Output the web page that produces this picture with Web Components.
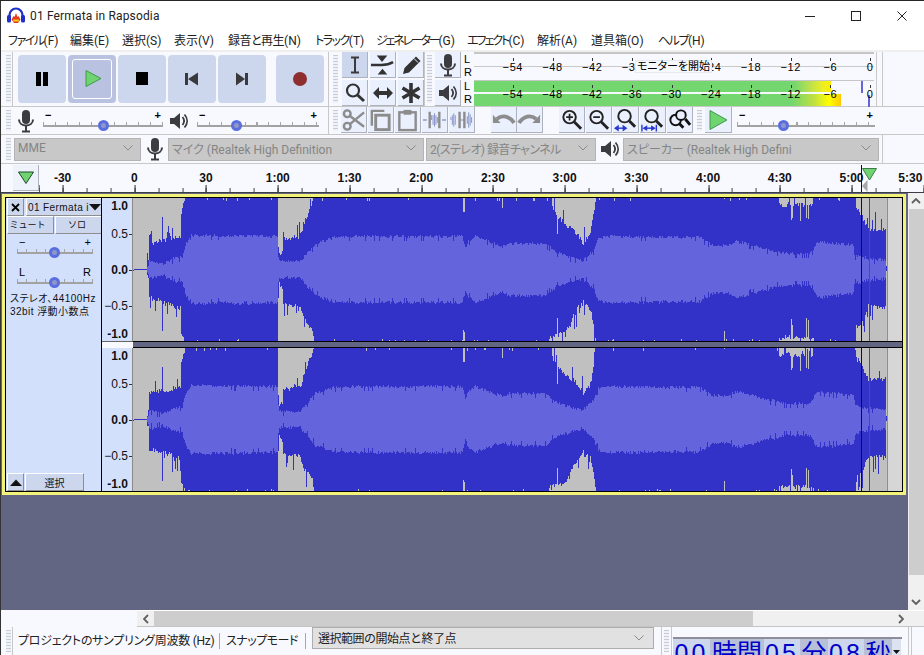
<!DOCTYPE html>
<html lang="ja"><head><meta charset="utf-8"><title>Audacity</title>
<style>
html,body{margin:0;padding:0;width:924px;height:655px;overflow:hidden;background:#f8f9ff}
body{font-family:Roboto,"Noto Sans CJK JP",sans-serif;font-size:12px;color:#000}
</style></head><body>
<aud-app></aud-app>
<script>
const UI='Roboto,"Noto Sans CJK JP",sans-serif';
function def(name,css,html,init){
  customElements.define(name,class extends HTMLElement{
    constructor(){super();const h=typeof html==='function'?html(this):html;
      this.attachShadow({mode:'open'}).innerHTML='<style>'+css+'</style>'+h;}
    connectedCallback(){ if(init) init(this); }
  });
}
const svg=(w,h,b)=>`<svg xmlns="http://www.w3.org/2000/svg" width="${w}" height="${h}" viewBox="0 0 ${w} ${h}">${b}</svg>`;
const I={
 pause:svg(20,20,'<path d="M4 3h5v14H4zM11 3h5v14h-5z" fill="#000"/>'),
 play:svg(20,20,'<path d="M4 1.500L19 9.500 4 17.500z" fill="#6fd36f" stroke="#3f9a4b"/>'),
 stop:svg(20,20,'<path d="M4 3h12v13H4z" fill="#000"/>'),
 prev:svg(20,20,'<path d="M3 4h3v12H3zM16 3.500v13L6 10z" fill="#3a3a3e"/>'),
 next:svg(20,20,'<path d="M16 4h-3v12h3zM4 3.500v13L13 10z" fill="#3a3a3e"/>'),
 rec:svg(20,20,'<circle cx="10" cy="10" r="7" fill="#8f2e2e"/>'),
 ibeam:svg(24,24,'<path d="M8 4.500h8M8 19.500h8M12 5v14" fill="none" stroke="#3a3a3a" stroke-width="2"/>'),
 env:svg(26,26,'<path d="M7 3h11l-5.500 7zM8 23h10l-5-6z" fill="#333"/><path d="M1 13h11q7 0 12-3" fill="none" stroke="#333" stroke-width="2.500"/>'),
 pencil:svg(24,24,'<path d="M4 21l1.500-6L17 3.500l4.500 4.500L10 19.500z" fill="#333"/><path d="M15 5.500l4 4" stroke="#eaf0fd" stroke-width="1"/>'),
 mag:svg(24,24,'<circle cx="10" cy="9.500" r="6" fill="none" stroke="#333" stroke-width="2.200"/><path d="M14.500 14l6.500 6" stroke="#333" stroke-width="3"/>'),
 shift:svg(24,24,'<path d="M2 12l6-6v4h8V6l6 6-6 6v-4H8v4z" fill="#333"/>'),
 multi:svg(24,24,'<path d="M12 2v20M3.500 7l17 10M20.500 7l-17 10" stroke="#333" stroke-width="3.600"/>'),
 mic:svg(18,24,'<rect x="5" y="1" width="8" height="14" rx="4" fill="#3c3c40"/><path d="M2 10.500c0 8 14 8 14 0" fill="none" stroke="#3c3c40" stroke-width="2"/><path d="M9 17v5M5 22.500h8" stroke="#3c3c40" stroke-width="2"/>'),
 spk:svg(20,20,'<path d="M1 7h4l6-5v16l-6-5H1z" fill="#3c3c40"/><path d="M13.500 6c2 2.500 2 5.500 0 8M15.500 3.500c3.500 4 3.500 9 0 13" fill="none" stroke="#3c3c40" stroke-width="1.800"/>'),
 cut:svg(26,26,'<g fill="none" stroke="#8c8c8c" stroke-width="2.500"><circle cx="6.500" cy="6.500" r="3.500"/><circle cx="6.500" cy="19.500" r="3.500"/><path d="M9 8.500L24 20M9 17.500L24 5"/></g>'),
 copy:svg(26,26,'<path d="M4 19V3.500h13" fill="none" stroke="#8c8c8c" stroke-width="2.500"/><rect x="8" y="8" width="14" height="15" fill="none" stroke="#8c8c8c" stroke-width="3"/>'),
 paste:svg(26,26,'<rect x="4.500" y="5" width="17" height="18.500" fill="none" stroke="#8c8c8c" stroke-width="2.500"/><path d="M9 2.500h8v5H9z" fill="#8c8c8c"/>'),
 trim:svg(26,26,'<path d="M1 13h4M21 13h4" stroke="#8c9ac0" stroke-width="1.500"/><path d="M8 4.500v17M18 4.500v17" stroke="#8c8c8c" stroke-width="2.500"/><path d="M10 13v-5m1.500 0v10m1.500-12v14m1.500-12v10m1.500-8v6" stroke="#8a92c8" stroke-width="1"/>'),
 sil:svg(26,26,'<path d="M11 4.500v17M16 4.500v17" stroke="#8c8c8c" stroke-width="2.500"/><path d="M2 13v-3m1.500-2v10m1.500-12v14m1.500-12v10M19 9v8m1.500-12v16m1.500-14v12m1.500-9v6" stroke="#8a92c8" stroke-width="1"/><path d="M11 13h5" stroke="#8c8c8c"/>'),
 undo:svg(26,26,'<path d="M2 16V7.500l8 8.500H2z" fill="#8c8c8c"/><path d="M6 12c6-5 13-3 18 4" fill="none" stroke="#8c8c8c" stroke-width="4"/>'),
 redo:svg(26,26,'<path d="M24 16V7.500L16 16h8z" fill="#8c8c8c"/><path d="M20 12c-6-5-13-3-18 4" fill="none" stroke="#8c8c8c" stroke-width="4"/>'),
 zin:svg(26,26,'<circle cx="11" cy="10" r="6.500" fill="none" stroke="#222" stroke-width="2"/><path d="M16 15l7 7" stroke="#222" stroke-width="3"/><path d="M7.500 10h7M11 6.500v7" stroke="#222" stroke-width="1.800"/>'),
 zout:svg(26,26,'<circle cx="11" cy="10" r="6.500" fill="none" stroke="#222" stroke-width="2"/><path d="M16 15l7 7" stroke="#222" stroke-width="3"/><path d="M7.500 10h7" stroke="#222" stroke-width="1.800"/>'),
 zsel:svg(26,26,'<circle cx="12" cy="9" r="6.500" fill="none" stroke="#222" stroke-width="2"/><path d="M17 14l6 6" stroke="#222" stroke-width="3"/><path d="M1 21.500l5-3.500v7zM15 21.500l-5-3.500v7z" fill="#2a3ad0"/><path d="M5 21.500h6" stroke="#2a3ad0" stroke-width="1.500"/>'),
 zfit:svg(26,26,'<circle cx="12" cy="9" r="6.500" fill="none" stroke="#222" stroke-width="2"/><path d="M17 14l6 6" stroke="#222" stroke-width="3"/><path d="M2 18v7M17 18v7" stroke="#2a3ad0" stroke-width="1.500"/><path d="M2.500 21.500l5-3v6zM16.500 21.500l-5-3v6z" fill="#2a3ad0"/><path d="M5 21.500h9" stroke="#2a3ad0" stroke-width="1.500"/>'),
 ztog:svg(26,26,'<circle cx="9" cy="13" r="5.500" fill="none" stroke="#111" stroke-width="2"/><circle cx="14.500" cy="8" r="5" fill="#eaf0fd" stroke="#111" stroke-width="2"/><path d="M13 17l4 4M19 12l5 6" stroke="#111" stroke-width="3"/>'),
 play2:svg(24,24,'<path d="M4 2.500L21 12 4 21.500z" fill="#6fd36f" stroke="#3f9a4b"/>'),
 logo:svg(18,17,'<path d="M2.500 10V8a6.500 6.500 0 0 1 13 0v2" fill="none" stroke="#1d2fc4" stroke-width="2.200"/><rect x="0" y="8" width="4" height="7.500" rx="1.500" fill="#1d2fc4"/><rect x="14" y="8" width="4" height="7.500" rx="1.500" fill="#1d2fc4"/><path d="M4.500 12.500l2-3.500 1 1 1.500-4 1.500 4 1-1 2 3.500-2.500 3.500h-4z" fill="#e23b21"/><path d="M6 13.500h6" stroke="#f5c518" stroke-width="2"/>'),
 chev:svg(10,6,'<path d="M.5.500L5 5 9.500.500" fill="none" stroke="#8a8a8a" stroke-width="1"/>')
};

def('aud-grip',':host{display:block;flex:none;width:5px;align-self:stretch;margin:3px 0;background:repeating-linear-gradient(#c9ccd6 0 1px,#eff1f8 1px 3px)}','');

def('aud-titlebar',`:host{display:flex;align-items:center;height:29px;background:#fff;font:12px ${UI};color:#222}
 .ic{margin:0 5px 0 7px;display:flex} .t{flex:1;letter-spacing:.15px}
 .w{display:flex;align-items:center;justify-content:center;width:46px;height:29px;flex:none}`,
 `<span class="ic">${I.logo}</span><span class="t"><slot></slot></span>
 <span class="w">${svg(10,10,'<path d="M0 5.500h10" stroke="#222"/>')}</span>
 <span class="w">${svg(10,10,'<rect x=".5" y=".5" width="9" height="9" fill="none" stroke="#222"/>')}</span>
 <span class="w" style="margin-right:-1px">${svg(10,10,'<path d="M.5.500l9 9M9.500.500l-9 9" stroke="#222"/>')}</span>`);

def('aud-menubar',`:host{display:flex;height:20px;box-sizing:border-box;padding-bottom:2px;align-items:center;background:#fff;padding-left:8px;font:12px ${UI};font-feature-settings:"palt";color:#222;white-space:nowrap}
 ::slotted(span){flex:none}`,'<slot></slot>');

def('aud-btn',`:host{display:flex;align-items:center;justify-content:center;flex:none;box-sizing:border-box;width:26px;height:26px;background:#eaf0fd;border-right:1px solid #aeb2bc;border-bottom:1px solid #aeb2bc}
 :host([big]){width:48px;height:48px;background:#ccd7ee;border:0;border-radius:4px}
 :host([hot]){background:#b9c3e1;position:relative}
 :host([hot])::before{content:"";position:absolute;inset:4px;border:1px solid #fff;border-radius:3px}
 :host([on]){background:#ccd7ee}`,'<slot></slot>');

def('aud-slider',`:host{display:block;flex:none;position:relative;font:bold 11px "Liberation Sans",sans-serif;height:28px}
 .l{display:flex;justify-content:space-between;padding:0 2px;height:16px;line-height:16px;box-sizing:border-box}
 .tk{position:absolute;left:0;right:0;top:15px;height:3px;background:repeating-linear-gradient(90deg,#a4a4a4 0 1px,transparent 1px var(--s,11.9px))}
 .tr{position:absolute;left:0;right:0;top:18px;height:2px;background:#a2a2a2}
 .th{position:absolute;top:13px;width:11px;height:11px;box-sizing:border-box;border-radius:50%;border:3px solid #5a6ee0;background:#8f97c8;margin-left:-5.500px}`,
 e=>`<div class="l"><span>${e.getAttribute('a')}</span><span>${e.getAttribute('b')}</span></div><div class="tk"></div><div class="tr"></div><div class="th" style="left:${e.getAttribute('pos')}px"></div>`);

def('aud-meter',`:host{display:flex;flex:none;height:var(--h,28px);position:relative;font:11px "Liberation Sans",sans-serif;color:#000}
 .lr{width:10px;display:flex;flex-direction:column;line-height:13px;box-sizing:border-box;padding-top:var(--lp,1px)}
 .m{position:relative;width:400px;box-sizing:border-box;background:#f8f9ff;border-top:var(--bt,2px) solid #c6c6c6;display:flex;flex-direction:column}
 .b{height:var(--bar,12px);background:#f8f9ff}
 .g{height:var(--gap,1px);background:var(--gapc,#c9c9c9)}
 .b2{height:var(--bar2,13px)}
 .fill{height:100%}
 .pk{position:absolute;width:2px;background:#6464dc}
 .sc{position:absolute;left:19px;top:0;bottom:0;display:flex;align-items:center;letter-spacing:.6px}
 .sc span{width:39.700px;flex:none;text-align:center;position:relative}
 .sc span::before{content:"";position:absolute;left:50%;top:-3px;height:3px;border-left:1px solid #333}
 .tip{position:absolute;left:161px;width:77px;top:6px;height:13px;box-sizing:border-box;background:#f8f9ff;border:1px solid #e6e8f2;text-align:center;font:11px ${UI};font-feature-settings:"palt";line-height:12px}`,
 e=>{const s=['−54','−48','−42','−36','−30','−24','−18','−12','−6','0'].map(x=>`<span>${x}</span>`).join('');
 const play=e.hasAttribute('play');
 return `<div class="lr"><span>L</span><span>R</span></div><div class="m">
  <div class="b">${play?'<div class="fill" style="width:357px;background:linear-gradient(90deg,#74d66e 0 320px,#b8e050 335px,#f0f020 350px,#ffee00)"></div>':''}</div><div class="g"></div>
  <div class="b b2">${play?'<div class="fill" style="width:367px;background:linear-gradient(90deg,#74d66e 0 318px,#c0e040 340px,#ffff00 355px,#ffc800)"></div>':''}</div>
  ${play?'<div class="pk" style="left:387px;top:0;height:12px"></div><div class="pk" style="left:394px;top:14px;height:12px"></div>':''}
  <div class="sc">${s}</div>
  ${play?'':'<div class="tip">モニターを開始</div>'}
 </div>`});

def('aud-combo',`:host{display:flex;align-items:center;flex:none;box-sizing:border-box;height:23px;background:#c8c8c8;border:1px solid #b4b4b4;color:#858585;font:12px ${UI};font-feature-settings:"palt";padding:0 3px 2px;white-space:nowrap;overflow:hidden}
 :host([live]){background:#e1e1e1;border:1px solid #adadad;color:#222;font-feature-settings:normal;height:22px;padding:0 5px 1px}
 .t{flex:1;overflow:hidden;letter-spacing:var(--ls,0)} .c{flex:none;display:flex;margin-left:4px;margin-right:4px;letter-spacing:0}`,
 `<span class="t"><slot></slot></span><span class="c">${I.chev}</span>`);

def('aud-transport',`:host{display:flex;flex:none;width:329px;box-sizing:border-box;padding-left:6px;height:54px;border-right:1px solid #c8c8c8}
 .in{display:flex;gap:2px;margin-left:1px;border-left:1px solid #c8c8c8;padding:3px 0 0 5px;height:51px;flex:1}
 ::slotted(aud-btn:last-child){margin-left:8px}`,'<aud-grip></aud-grip><div class="in"><slot></slot></div>');

def('aud-toolgrid',`:host{display:grid;grid-template-columns:repeat(3,26px);grid-template-rows:26px 26px;gap:2px 2px;flex:none;align-content:start}`,'<slot></slot>');

def('aud-ruler',`:host{display:flex;height:28px;flex:none;border-top:1px solid #c8c8c8;border-bottom:1px solid #3c3c44;background:#f8f9ff;position:relative;box-sizing:content-box;overflow:hidden}
 .sp{width:13px;flex:none}
 .b{width:26px;height:26px;margin-top:1px;flex:none;box-sizing:border-box;background:#eef2fb;border-right:1px solid #aeb2bc;border-bottom:1px solid #aeb2bc;display:flex;align-items:center;justify-content:center}
 .sc{flex:1;position:relative;overflow:hidden;display:flex;font:bold 12px "Liberation Sans",sans-serif;color:#111;padding-top:6px;box-sizing:border-box}
 .sc span{flex:none;width:71.730px;text-align:center;line-height:16px}
 .sc span:first-child{margin-left:-12.270px}
 .sc span:last-of-type{width:46px}
 .tk{position:absolute;left:0;right:0;bottom:0;height:4px;background:repeating-linear-gradient(90deg,#444 0 1px,transparent 1px 23.910px) 23.570px 0}
 .mj{position:absolute;left:0;right:0;bottom:0;height:7px;background:repeating-linear-gradient(90deg,#222 0 1px,transparent 1px 71.730px) 23.570px 0}
 .cur{position:absolute;left:861px;top:1px;bottom:0;width:1px;background:#111}
 .m{position:absolute;left:862px;top:4px}`,
 ()=>`<div class="sp"></div><div class="b">${svg(18,14,'<path d="M1.500 1h15L9 12.500z" fill="#6fd36f" stroke="#1f4a2a"/>')}</div>
 <div class="sc">${['-30','0','30','1:00','1:30','2:00','2:30','3:00','3:30','4:00','4:30','5:00','5:30'].map(x=>`<span>${x}</span>`).join('')}<div class="tk"></div><div class="mj"></div></div>
 <div class="cur"></div><div class="m">${svg(16,24,'<path d="M.5.500h14L7.500 12z" fill="#6fd36f" stroke="#3f7a4b"/><path d="M0 18l5.500-6v12z" fill="#a8a8a8"/>')}</div>`);

def('aud-vruler',`:host{display:grid;grid-template-rows:15px 42px 30px 41px 15px;width:30px;flex:none;box-sizing:content-box;background:#d2e0fc;border-right:1px solid #8a8a8a;font:12px "Liberation Sans",sans-serif;color:#111}
 div{display:flex;align-items:center;justify-content:flex-end;padding-right:4px;position:relative}
 div.k{font-weight:bold}
 div.t::after{content:"";position:absolute;right:0;top:50%;width:3px;border-top:1px solid #333}`,
 `<div class="k">1.0</div><div class="t">0.5</div><div class="k t">0.0</div><div class="t">−0.5</div><div class="k">-1.0</div>`);

/* waveform ------------------------------------------------------------ */
const TOP=[[133,0],[146,.6],[148,5],[149,24],[180,30],[181,55],[184,65],[185,72],[277,72],[278,20],[279,12],[282,14],[283,28],[300,30],[303,40],[305,48],[311,60],[314,72],[551,72],[552,60],[558,50],[566,42],[575,35],[580,28],[583,24],[590,32],[592,45],[594,58],[596,72],[778,72],[779,62],[813,62],[814,72],[855,72],[856,58],[862,50],[868,38],[886,38]];
const BOT=[[133,0],[146,.6],[148,5],[149,26],[180,36],[181,62],[184,68],[185,72],[277,72],[278,28],[279,12],[282,18],[283,32],[300,34],[303,46],[312,58],[314,72],[548,72],[549,66],[560,62],[565,60],[570,50],[578,36],[582,32],[590,36],[592,46],[594,58],[596,72],[778,72],[779,65],[813,65],[814,72],[855,72],[856,55],[862,50],[868,35],[886,35]];
const RMS=[[133,0],[146,.5],[148,4],[149,9],[163,6],[173,11],[182,13],[185,24],[190,34],[277,33],[278,14],[279,8],[300,8],[303,12],[315,26],[337,33],[462,33],[465,21],[468,28],[475,33],[502,23],[508,26],[545,26],[558,16],[582,9],[593,19],[598,31],[605,33],[690,32],[698,33],[713,24],[727,24],[737,28],[783,16],[810,16],[817,28],[853,24],[855,14],[868,11],[886,9]];
const lerp=(a,x)=>{for(let i=1;i<a.length;i++)if(x<=a[i][0]){const[p,q]=a[i-1],[r,s]=a[i];return q+(s-q)*(x-p)/(r-p||1)}return a[a.length-1][1]};
function rng(s){return()=>{s=(s*1664525+1013904223)>>>0;return s/4294967296}}
def('aud-wave',`:host{display:block;width:769px;height:143px;flex:none} canvas{display:block}`,'<canvas width="769" height="143"></canvas>',e=>{
  const c=e.shadowRoot.querySelector('canvas').getContext('2d'),r=rng(+e.getAttribute('seed'));
  const H=71.5,X0=133;
  c.fillStyle='#c0c0c0';c.fillRect(0,0,769,143);
  c.fillStyle='#d6d6d6';c.fillRect(888-X0,0,769,143);
  c.fillStyle='#8e8e8e';c.fillRect(887-X0,0,1,143);
  const spikes={162:[53,61],463:[58,60],464:[58,62],502:[62,71],724:[71,61],557:[36,48],583:[25,30],
    791:[50,49],792:[52,55],800:[49,71],806:[52,48],808:[51,50]};
  for(let x=133;x<886;x++){
    let t=lerp(TOP,x),b=lerp(BOT,x);
    const sp=(v)=>{ if(v>=71.500){const q=r();return q<.03?70:q<.05?69:72}
      const q=r(),w=r();if(v<2)return v;return v+(q<.22?w*20:w*5)};
    t=sp(t);b=sp(b);
    if(spikes[x]){t=spikes[x][0];b=spikes[x][1]}
    let rm=lerp(RMS,x);
    if(rm>5){const q=r(),w=r();rm+=(w-.5)*3;if(q<.06)rm-=3+w*3;}
    t=Math.min(t,H);b=Math.min(b,H);
    c.fillStyle='#3232c8';c.fillRect(x-X0,Math.round(H-t),1,Math.max(1,Math.round(t+b)));
    if(rm>1.500){c.fillStyle='#6464dc';c.fillRect(x-X0,Math.round(H-rm),1,Math.round(rm*2));}
  }
  c.fillStyle='#3232c8';c.fillRect(886-X0,68,1,5);
  c.fillStyle='#1a0a30';c.fillRect(861-X0,0,1,143);
  c.fillStyle='#2f6a4a';c.fillRect(869-X0,0,1,143);
});

def('aud-channel',`:host{display:flex;height:143px;flex:none}`,e=>`<aud-vruler></aud-vruler><aud-wave seed="${e.getAttribute('seed')}"></aud-wave>`);

def('aud-pbtn',`:host{display:flex;align-items:center;justify-content:center;box-sizing:border-box;flex:none;background:#ccd7ee;border-top:1px solid #fff;border-left:1px solid #fff;border-right:1px solid #8e8e8e;border-bottom:1px solid #8e8e8e;font:10px "Noto Sans CJK JP",sans-serif;color:#111;white-space:nowrap;overflow:hidden}`,'<slot></slot>');

def('aud-panel',`:host{display:flex;flex-direction:column;flex:none;width:95px;box-sizing:border-box;background:#d2e0fc;padding-left:1px;border:0;font:10px "Liberation Sans","Noto Sans CJK JP",sans-serif}
 .r{display:flex;gap:1px;margin-bottom:0}
 .s{margin-left:10px;margin-top:0}
 .info{margin:0 0 0 3px;font:10px/13px "Liberation Sans","Noto Sans CJK JP",sans-serif;letter-spacing:.45px;white-space:nowrap;color:#111;font-feature-settings:"palt"}
 .sp{flex:1}`,
 `<div class="r" style="height:18px;gap:2px"><aud-pbtn style="width:17px;height:18px">${svg(9,9,'<path d="M1 1l7 7M8 1l-7 7" stroke="#000" stroke-width="1.800"/>')}</aud-pbtn>
  <aud-pbtn style="width:76px;height:18px;justify-content:space-between;padding:0 1px 0 1px;font:10px 'Liberation Sans',sans-serif;letter-spacing:.4px"><span>01 Fermata i</span><span style="display:flex">${svg(12,7,'<path d="M0 0h12L6 6.500z" fill="#111"/>')}</span></aud-pbtn></div>
 <div class="r" style="height:18px"><aud-pbtn style="width:47px;height:18px;padding:0 6px 2px 0;font-size:9px">ミュート</aud-pbtn><aud-pbtn style="width:47px;height:18px;padding:0 3px 2px 0;font-size:9px">ソロ</aud-pbtn></div>
 <div class="s"><aud-slider a="−" b="+" pos="37" style="width:76px;--s:9.400px;font-weight:normal"></aud-slider></div>
 <div class="s" style="margin-top:2px"><aud-slider a="L" b="R" pos="37" style="width:76px;--s:9.400px;font-weight:normal"></aud-slider></div>
 <div class="info">ステレオ、44100Hz<br>32bit 浮動小数点</div>
 <div class="sp"></div>
 <div class="r" style="height:18px"><aud-pbtn style="width:17px;height:18px">${svg(12,7,'<path d="M0 7h12L6 .5z" fill="#111"/>')}</aud-pbtn><aud-pbtn style="width:59px;height:18px">選択</aud-pbtn></div>`);

def('aud-track',`:host{display:flex;flex:none;width:904px;box-sizing:border-box;border:3px solid #f3f37c;outline:0;background:#000;padding:1px}
 .p{display:flex;width:100%}
 .v{width:1px;background:#000;flex:none}
 .c{display:flex;flex-direction:column;flex:none}
 .sep{display:flex;height:7px;flex:none;box-sizing:border-box;background:#626682}
 .sep i{width:31px;flex:none;background:#f8f9ff;display:block;border-top:1px solid #666}
 .sep b{flex:1;border-top:1px solid #000;border-bottom:1px solid #000;display:block}`,
 `<div class="p"><aud-panel></aud-panel><div class="v"></div><div class="c"><aud-channel seed="11"></aud-channel><div class="sep"><i></i><b></b></div><aud-channel seed="777"></aud-channel></div></div>`);

def('aud-vscroll',`:host{display:flex;flex-direction:column;width:16px;flex:none;background:#f0f0f0;align-items:stretch}
 .a{height:16px;display:flex;align-items:center;justify-content:center;flex:none}
 .th{flex:1;background:#cdcdcd;margin:0 0 19px 1px}`,
 `<div class="a">${svg(10,6,'<path d="M1 5l4-4 4 4" fill="none" stroke="#606060" stroke-width="1.800"/>')}</div><div class="th"></div><div class="a">${svg(10,6,'<path d="M1 1l4 4 4-4" fill="none" stroke="#606060" stroke-width="1.800"/>')}</div>`);

def('aud-hscroll',`:host{display:flex;height:16px;flex:none;box-sizing:border-box;margin-left:137px;background:#f0f0f0;border-top:1px solid #fff;align-items:stretch;height:17px;border-bottom:1px solid #c4c4c4}
 .a{width:17px;display:flex;align-items:center;justify-content:center;flex:none}
 .th{width:599px;background:#cdcdcd;flex:none}
 .sp{flex:1}`,
 `<div class="a">${svg(6,10,'<path d="M5 1L1 5l4 4" fill="none" stroke="#606060" stroke-width="1.800"/>')}</div><div class="th"></div><div class="sp"></div><div class="a" style="width:31px;padding-right:15px;box-sizing:border-box">${svg(6,10,'<path d="M1 1l4 4-4 4" fill="none" stroke="#606060" stroke-width="1.800"/>')}</div>`);

def('aud-clock',`:host{display:flex;flex:none;width:229px;height:18px;margin-top:10px;box-sizing:border-box;border-top:2px solid #8e8e98;overflow:hidden;font:25px/30px "Liberation Sans","Noto Sans CJK JP",sans-serif;color:#0000c8;align-items:flex-start;position:relative}
 span{display:block;flex:none;height:30px;text-align:center;background:#b8c0d8;margin-top:-1px}
 span.d{background:#ccd6ec;letter-spacing:3px}
 i{flex:none;width:9px;height:18px;background:#dde2f0;display:flex;justify-content:center;align-items:flex-end;padding-bottom:3px;box-sizing:border-box;font-size:0}`,
 `<span class="d" style="width:37px">00</span><span style="width:54px">時間</span><span class="d" style="width:36px">05</span><span style="width:28px">分</span><span class="d" style="width:36px">08</span><span style="width:28px">秒</span><i>${svg(7,4,'<path d="M0 0h7L3.500 4z" fill="#111"/>')}</i>`);

def('aud-selbar',`:host{display:flex;height:28px;flex:none;background:#f8f9ff;font:12px ${UI};font-feature-settings:"palt";color:#222;white-space:nowrap;padding-left:6px;box-sizing:border-box}
 .lb{display:flex;align-items:center;height:24px;box-sizing:border-box}
 .v{width:1px;height:16px;background:#a8a8a8;margin-top:6px;flex:none}
 .bar{width:1px;background:#c8c8c8;flex:none}`,
 `<aud-grip></aud-grip><div class="bar" style="margin-left:1px"></div>
 <div class="lb" style="width:206px;padding-left:5px;letter-spacing:-.25px">プロジェクトのサンプリング周波数 (Hz)</div><div class="v"></div>
 <div class="lb" style="width:85px;padding-left:6px;letter-spacing:-.5px">スナップモード</div><div class="v"></div>
 <aud-combo live style="width:342px;margin-left:6px;--ls:-.5px">選択範囲の開始点と終了点</aud-combo>
 <div class="bar" style="margin-left:7px"></div><aud-grip style="margin-left:2px"></aud-grip><div class="bar" style="margin-left:2px"></div>
 <div style="width:1px;flex:none"></div><aud-clock></aud-clock>
 <div class="bar" style="margin-left:6px"></div><div class="bar" style="margin-left:2px"></div>`);

const B=(n,a='')=>`<aud-btn ${a}>${I[n]}</aud-btn>`;
const mi=[['ファイル','(F)',62,-1.5],['編集','(E)',52,0],['選択','(S)',52,0],['表示','(V)',54,0],['録音と再生','(N)',87,-.5],['トラック','(T)',61,-1.5],['ジェネレーター','(G)',91,-2.2],['エフェクト','(C)',70,-2],['解析','(A)',54,0],['道具箱','(O)',67,0],['ヘルプ','(H)',60,-1.5]];
def('aud-app',`:host{display:flex;flex-direction:column;width:924px;height:655px;box-sizing:border-box;border-top:1px solid #262626;overflow:hidden;position:relative}
 :host::after{content:"";position:absolute;left:0;top:0;bottom:0;width:1px;background:#333}
 .tools{flex:none;background:#f8f9ff;border-top:2px solid #efefef}
 .row{display:flex;box-sizing:border-box;border-bottom:1px solid #c8c8c8}
 .a{height:55px;border-bottom:1px solid #c8c8c8}
 .b{height:28px}
 .c{height:28px}
 .cell{display:flex;flex:none;box-sizing:border-box}
 .v1{width:1px;background:#c8c8c8;flex:none}
 .ic{display:flex;align-items:center;justify-content:center;flex:none}
 .main{flex:1;display:flex;background:#626682;min-height:0;padding-left:2px;box-sizing:border-box}
 .tr{flex:1;padding-top:1px;min-width:0}
 `,
 ()=>`<aud-titlebar>01 Fermata in Rapsodia</aud-titlebar>
 <aud-menubar>${mi.map(m=>`<span style="width:${m[2]}px"><span style="letter-spacing:${m[3]}px">${m[0]}</span>${m[1]}</span>`).join('')}</aud-menubar>
 <div class="tools">
  <div class="row a">
   <aud-transport>${B('pause','big')}${B('play','big hot')}${B('stop','big')}${B('prev','big')}${B('next','big')}${B('rec','big')}</aud-transport>
   <div class="cell" style="padding-left:4px;width:96px"><aud-grip></aud-grip><div style="width:4px"></div><aud-toolgrid style="padding-top:0">
     ${B('ibeam','on')}${B('env')}${B('pencil')}${B('mag')}${B('shift')}${B('multi')}</aud-toolgrid></div>
   <div class="v1" style="margin-left:-1px"></div>
   <div class="cell" style="padding-left:2px;flex-direction:row"><aud-grip></aud-grip><div style="width:3px"></div>
     <div style="display:flex;flex-direction:column;gap:2px">
       <div style="display:flex;gap:3px;height:26px">${'<aud-btn>'+I.mic+'</aud-btn>'}</div>
       <div style="display:flex;gap:3px;height:26px">${'<aud-btn>'+I.spk+'</aud-btn>'}</div>
     </div>
     <div style="display:flex;flex-direction:column;margin-left:3px">
       <aud-meter></aud-meter>
       <aud-meter play style="--h:26px;--bt:1px;--gap:2px;--gapc:#f8f9ff;--lp:0px"></aud-meter>
     </div>
     <div class="v1" style="margin-left:2px"></div><div class="v1" style="margin-left:5px"></div>
   </div>
  </div>
  <div class="row b">
   <div class="cell" style="width:329px;padding-left:6px;border-right:1px solid #c8c8c8"><aud-grip></aud-grip>
     <div class="ic" style="margin-left:2px;width:26px">${I.mic}</div>
     <aud-slider a="−" b="+" pos="60" style="width:120px;margin-left:4px"></aud-slider>
     <div class="ic" style="width:20px;margin-left:6px">${I.spk}</div>
     <aud-slider a="−" b="+" pos="39" style="width:122px;margin-left:8px"></aud-slider>
   </div>
   <div class="cell" style="padding-left:4px"><aud-grip></aud-grip><div style="width:3px"></div>
     <div style="display:flex;gap:1px">${B('cut')}${B('copy')}${B('paste')}${B('trim')}${B('sil')}</div>
     <div style="display:flex;gap:0;margin-left:16px">${B('undo')}${B('redo')}</div>
     <div style="display:flex;gap:1px;margin-left:16px">${B('zin')}${B('zout')}${B('zsel')}${B('zfit')}${B('ztog')}</div>
     <aud-grip style="margin-left:4px"></aud-grip><div style="width:3px"></div>
     <aud-btn style="width:27px">${I.play2}</aud-btn>
     <aud-slider a="−" b="+" pos="46" style="width:138px;margin-left:5px"></aud-slider>
   </div>
  </div>
  <div class="row c" style="border-bottom:0">
   <div class="cell" style="padding-left:6px;align-items:center;width:883px;border-right:1px solid #c8c8c8"><aud-grip></aud-grip>
     <aud-combo style="width:127px;margin-left:3px">MME</aud-combo>
     <div class="ic" style="width:27px">${I.mic}</div>
     <aud-combo style="width:256px">マイク (Realtek High Definition</aud-combo>
     <aud-combo style="width:170px;margin-left:2px;--ls:-.55px">2(ステレオ) 録音チャンネル</aud-combo>
     <div class="ic" style="width:27px">${I.spk}</div>
     <aud-combo style="width:256px">スピーカー (Realtek High Defini</aud-combo>
   </div>
  </div>
 </div>
 <aud-ruler></aud-ruler>
 <div class="main"><div class="tr"><aud-track></aud-track></div><aud-vscroll></aud-vscroll></div>
 <aud-hscroll></aud-hscroll>
 <aud-selbar></aud-selbar>`);
</script>
</body></html>
